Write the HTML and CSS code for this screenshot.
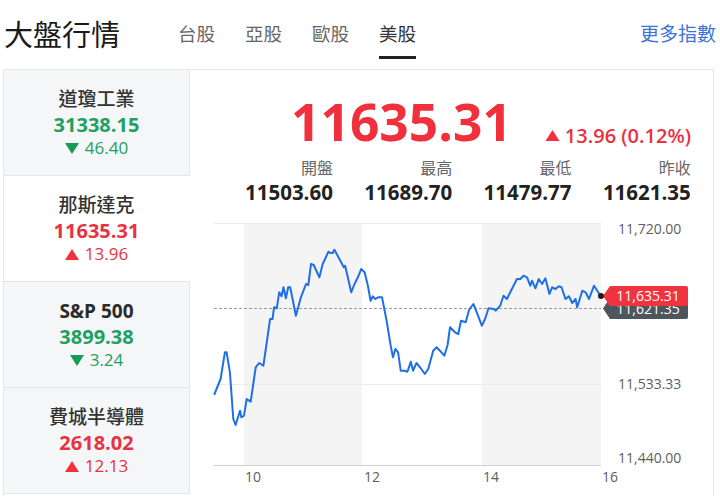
FILE: index.html
```html
<!DOCTYPE html>
<html lang="zh-Hant">
<head>
<meta charset="utf-8">
<title>大盤行情</title>
<link rel="stylesheet" href="styles.css">
</head>
<body>
<header class="header">
  <h1 class="title">大盤行情</h1>
  <nav class="tabs">
    <a class="tab">台股</a>
    <a class="tab">亞股</a>
    <a class="tab">歐股</a>
    <a class="tab active">美股</a>
  </nav>
  <a class="more">更多指數</a>
</header>
<main class="board">
  <aside class="list">
    <div class="card">
      <div class="name">道瓊工業</div>
      <div class="val down">31338.15</div>
      <div class="chg down"><svg class="tri" viewBox="0 0 14 11"><path d="M0 0H14L7 11Z"/></svg>46.40</div>
    </div>
    <div class="card current">
      <div class="name">那斯達克</div>
      <div class="val up">11635.31</div>
      <div class="chg up"><svg class="tri" viewBox="0 0 14 11"><path d="M0 11H14L7 0Z"/></svg>13.96</div>
    </div>
    <div class="card">
      <div class="name latin">S&amp;P 500</div>
      <div class="val down">3899.38</div>
      <div class="chg down"><svg class="tri" viewBox="0 0 14 11"><path d="M0 0H14L7 11Z"/></svg>3.24</div>
    </div>
    <div class="card">
      <div class="name">費城半導體</div>
      <div class="val up">2618.02</div>
      <div class="chg up"><svg class="tri" viewBox="0 0 14 11"><path d="M0 11H14L7 0Z"/></svg>12.13</div>
    </div>
  </aside>
  <section class="detail">
    <div class="quote">
      <span class="price">11635.31</span>
      <span class="change"><svg class="tri big" viewBox="0 0 14 11"><path d="M0 11H14L7 0Z"/></svg>13.96 (0.12%)</span>
    </div>
    <div class="stats">
      <div class="stat"><div class="label">開盤</div><div class="num">11503.60</div></div>
      <div class="stat"><div class="label">最高</div><div class="num">11689.70</div></div>
      <div class="stat"><div class="label">最低</div><div class="num">11479.77</div></div>
      <div class="stat"><div class="label">昨收</div><div class="num">11621.35</div></div>
    </div>
    <svg class="chart" width="523" height="286" viewBox="0 0 523 286">
      <rect class="band" x="54" y="14" width="118" height="242"/>
      <rect class="band" x="292" y="14" width="119" height="242"/>
      <line class="grid" x1="24" y1="14.5" x2="411" y2="14.5"/>
      <line class="grid" x1="24" y1="175.5" x2="411" y2="175.5"/>
      <line class="axis" x1="24" y1="256.5" x2="411" y2="256.5"/>
      <line class="prev" x1="24" y1="99.5" x2="411" y2="99.5"/>
      <polyline class="line" points="24.5,185 30.6,170 34.9,143.3 36.6,143.3 39.9,163.3 43.3,210 45.6,216 50,201.7 51.3,208.3 54,206.7 56.7,190 60.7,192.7 65.7,158.3 69.1,154 73.4,156.7 75.8,140 80.1,110 82.5,110 84.1,98.3 86.8,99.3 89.2,83.3 91.5,87.3 93.5,78.3 95.9,89.3 98.2,78.3 100.2,78.3 105.9,106.7 110.9,88.3 116,75 118.3,76 121,55 123.7,56 129.4,68.3 132.7,55 138.4,42.7 140.4,44 142.7,44 144.4,40.7 149.4,50 153.8,58.3 155.1,56.7 157.8,68.3 161.2,83.3 164.5,75 167.9,68.3 171.2,60 174.6,63.3 177.9,76.7 180.6,91.7 182.9,87.3 185.3,90 188,88.3 192,88.3 196.3,110 200.7,136.7 203,148.3 205.4,140 208.1,143.3 210.7,161.7 214.8,161.7 217.4,162.7 220.8,152.7 223.1,161.7 226.5,154 230.8,159.3 234.8,165 238.2,160 243.2,141.7 246.6,138.3 249.9,141.7 254.3,146.7 257.6,136 260,118.3 265,123.3 268.3,125 271,111.7 275.7,113.3 279.1,100.7 283.4,95 286.8,103.3 291.8,116.7 295.1,110 298.5,99.3 303.5,100 305.8,101.7 310.2,96.7 313.5,86.7 316.9,90 321.9,80 326.9,70 330.3,70 333.6,66.7 337,68.3 340.3,76.7 342,71.7 345.4,79.3 348.7,70 352.1,75 355.4,69.3 359.4,85 362.1,78.3 365.5,80 368.8,77.3 371.5,78.3 375.5,90 378.9,87.3 382.2,94 385.6,90 387.2,98.3 392.3,81.7 395.6,83.3 399,90 404,76.7 407.3,81.7 410.7,87.3"/>
      <text class="ylab" x="428" y="25">11,720.00</text>
      <text class="ylab" x="428" y="180">11,533.33</text>
      <text class="ylab" x="428" y="254">11,440.00</text>
      <text class="xlab" x="55" y="273">10</text>
      <text class="xlab" x="174" y="273">12</text>
      <text class="xlab" x="293" y="273">14</text>
      <text class="xlab" x="412" y="273">16</text>
      <path class="tag-prev" d="M413 99.5 L420 89 H496 Q498 89 498 91 V108 Q498 110 496 110 H420 Z"/>
      <text class="tag-text" x="458" y="105">11,621.35</text>
      <path class="tag-last" d="M413 87 L420 77 H496 Q498 77 498 79 V95 Q498 97 496 97 H420 Z"/>
      <text class="tag-text" x="458" y="92">11,635.31</text>
      <circle class="dot" cx="411" cy="87" r="3"/>
    </svg>
  </section>
</main>
</body>
</html>
```

FILE: styles.css
```css
* { box-sizing: border-box; }
html, body { margin: 0; padding: 0; background: #fff; }
body {
  width: 720px;
  height: 496px;
  overflow: hidden;
  font-family: "Open Sans", "Noto Sans CJK TC", sans-serif;
  color: #222;
}
.header {
  display: flex;
  align-items: flex-start;
  height: 69px;
  padding: 0 4px 0 4px;
}
.title {
  margin: 12px 0 0;
  font-size: 29px;
  line-height: 42px;
  font-weight: 400;
  color: #1a1a1a;
  font-family: "Noto Sans CJK TC", sans-serif;
}
.tabs {
  display: flex;
  gap: 30px;
  margin-left: 58px;
}
.tab {
  display: block;
  padding: 22px 0 10px;
  font-size: 18.5px;
  line-height: 24px;
  color: #666;
  border-bottom: 3px solid transparent;
}
.tab.active {
  color: #333;
  border-bottom-color: #222;
}
.more {
  margin: 22px 0 0 auto;
  font-size: 19px;
  line-height: 24px;
  color: #3d72d9;
}
.board {
  display: flex;
  width: 711px;
  height: 427px;
  margin-left: 3px;
  border: 1px solid #e6e8ea;
  border-bottom: none;
}
.list {
  width: 186px;
  flex: none;
  display: flex;
  flex-direction: column;
}
.card {
  height: 106px;
  flex: none;
  padding-top: 16px;
  text-align: center;
  background: #f5f6f8;
  border-right: 1px solid #e3e5e8;
  border-bottom: 1px solid #e3e5e8;
}
.card.current {
  background: #fff;
  border-right-color: #fff;
}
.name {
  font-size: 19px;
  line-height: 26px;
  color: #333;
  font-weight: 500;
}
.name.latin { font-weight: 700; color: #2b2b2b; }
.val {
  font-size: 20px;
  line-height: 26px;
  font-weight: 700;
}
.chg {
  display: flex;
  justify-content: center;
  align-items: center;
  gap: 6px;
  font-size: 17px;
  line-height: 20px;
}
.tri { width: 14px; height: 11px; fill: currentColor; }
.up { color: #e8323f; }
.down { color: #22a061; }
.chg.up .tri { fill: #f2313c; }
.chg.down .tri { fill: #129c55; }
.detail {
  flex: 1;
  min-width: 0;
  padding-top: 23px;
}
.quote {
  display: flex;
  justify-content: flex-end;
  align-items: baseline;
  gap: 33px;
  height: 56px;
  padding-right: 22px;
}
.price {
  font-size: 51.5px;
  line-height: 56px;
  font-weight: 700;
  color: #f0303c;
}
.change {
  display: flex;
  align-items: center;
  gap: 5px;
  font-size: 20px;
  font-weight: 600;
  color: #e8323f;
}
.tri.big { width: 15px; height: 11px; fill: #f2313c; }
.stats {
  display: grid;
  grid-template-columns: repeat(4, 119.3px);
  justify-items: start;
  margin-top: 8px;
  padding-left: 55px;
}
.stat { text-align: right; }
.label {
  font-size: 16px;
  line-height: 22px;
  color: #666;
}
.num {
  font-size: 20.5px;
  line-height: 26px;
  font-weight: 700;
  color: #222;
}
.chart {
  display: block;
  margin-top: 4px;
}
.band { fill: #f4f4f5; }
.grid { stroke: #ececec; stroke-width: 1; }
.axis { stroke: #cfcfcf; stroke-width: 1; }
.prev { stroke: #9a9a9a; stroke-width: 1; stroke-dasharray: 3 2; }
.line { fill: none; stroke: #1f6fe6; stroke-width: 2; stroke-linejoin: round; stroke-linecap: round; }
.ylab, .xlab { font-family: "Open Sans", sans-serif; font-size: 14px; fill: #5e5e5e; }
.tag-prev { fill: #4d565c; }
.tag-last { fill: #f0343f; }
.tag-text { font-family: "Open Sans", sans-serif; font-size: 14px; fill: #fff; text-anchor: middle; }
.dot { fill: #1d1d1d; }
```
